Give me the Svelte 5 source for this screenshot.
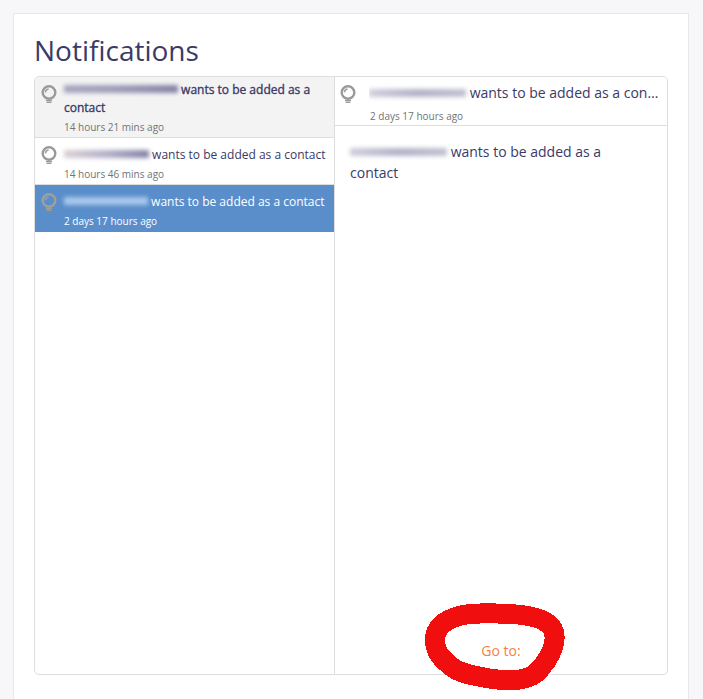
<script>
  const items = [
    { id: 1, who: 'w1', text: 'wants to be added as a contact', time: '14 hours 21 mins ago', unread: true },
    { id: 2, who: 'w2', text: 'wants to be added as a contact', time: '14 hours 46 mins ago' },
    { id: 3, who: 'w3', text: 'wants to be added as a contact', time: '2 days 17 hours ago', selected: true },
  ]
</script>

{#snippet bulb()}
  <svg class="bulb" viewBox="0 0 16 20" width="16" height="20" aria-hidden="true">
    <circle cx="8" cy="7.5" r="6.3" fill="none" stroke="currentColor" stroke-width="2.4" />
    <path d="M4.4 7.4a3.6 3.6 0 0 1 3.2-3.4" fill="none" stroke="currentColor" stroke-width="1.4" />
    <path d="M5 15.6h6M5.6 17.4h4.8" fill="none" stroke="currentColor" stroke-width="1.2" />
  </svg>
{/snippet}

<main class="card">
  <h1>Notifications</h1>
  <div class="panel">
    <ul class="list">
      {#each items as item (item.id)}
        <li class="row" class:unread={item.unread} class:selected={item.selected}>
          {@render bulb()}
          <div class="body">
            <div class="msg"><span class="smudge {item.who}"></span> {item.text}</div>
            <div class="time">{item.time}</div>
          </div>
        </li>
      {/each}
    </ul>
    <section class="detail">
      <header class="detail-head">
        {@render bulb()}
        <div class="body">
          <div class="subject"><span class="smudge w4"></span> wants to be added as a contact</div>
          <div class="time">2 days 17 hours ago</div>
        </div>
      </header>
      <div class="content">
        <p><span class="smudge w5"></span> wants to be added as a contact</p>
      </div>
      <div class="footer"><span class="goto">Go to:</span></div>
    </section>
  </div>
  <svg class="scribble" viewBox="0 0 160 105" width="160" height="105" shape-rendering="crispEdges" aria-hidden="true">
    <path d="M23 45C23 28 42 18 71 18.5C100 18 125 20 135 28C141 32 143 38 142.5 44C142 55 135 66 128 74C118 87 98 86 80 84C65 81 48 79 40 72C31 65 23 58 23 45Z" fill="none" stroke="#f10e0e" stroke-width="20" stroke-linejoin="round" />
  </svg>
</main>

<style>
  :global(body) {
    background: #f7f7f9;
    overflow: hidden;
    font-family: "Open Sans", "Noto Sans", sans-serif;
    color: #3a3a68;
  }

  .card {
    position: relative;
    box-sizing: border-box;
    width: 676px;
    height: 686px;
    margin: 13px 0 0 13px;
    padding: 20px 20px 24px 20px;
    background: #fff;
    border: 1px solid #e8e8ec;
    border-bottom: 0;
  }

  h1 {
    margin: 0;
    height: 42px;
    font-size: 28px;
    line-height: 32px;
    font-weight: 400;
    color: #3a3a68;
  }

  .panel {
    display: flex;
    height: 599px;
    box-sizing: border-box;
    border: 1px solid #dedede;
    border-radius: 5px;
    overflow: hidden;
  }

  .list {
    flex: 0 0 299px;
    margin: 0;
    padding: 0;
    list-style: none;
    border-right: 1px solid #dedede;
  }

  .row {
    display: flex;
    gap: 7px;
    padding: 8px 8px 2px 6px;
    border-bottom: 1px solid #dedede;
  }

  .row.unread {
    padding: 4px 8px 2px 6px;
    background: #f3f3f3;
  }

  .row.unread .msg {
    -webkit-text-stroke: 0.35px currentColor;
  }

  .row.unread .bulb {
    margin-top: 4px;
  }

  .row.selected {
    padding-bottom: 3px;
    background: #5a8ecb;
    color: #fff;
    border-bottom: 0;
  }

  .row.selected .time {
    color: #fff;
  }

  .row.selected .bulb {
    color: #a0a096;
  }

  .bulb {
    flex: none;
    color: #9a9a9a;
  }

  .body {
    flex: 1;
    min-width: 0;
  }

  .msg {
    font-size: 12px;
    line-height: 18px;
  }

  .time {
    font-size: 10px;
    line-height: 16px;
    margin-top: 2px;
    color: #6f7478;
  }

  .smudge {
    display: inline-block;
    height: 8px;
    vertical-align: 1px;
    background: linear-gradient(90deg, #a8a6c0, #9e9cb8 45%, #8582a6);
    filter: blur(2px);
  }

  .w1 { width: 114px; }
  .w2 { width: 85px; background: linear-gradient(90deg, #ddd0d6, #b3b1c8 50%, #8582a6); }
  .w3 { width: 84px; background: #a9c8ea; }
  .w4 { width: 97px; background: linear-gradient(90deg, #d0cfdc, #b3b2c8 50%, #c2c1d2); }
  .w5 { width: 97px; background: linear-gradient(90deg, #d0cfdc, #b3b2c8 50%, #c2c1d2); }

  .detail {
    flex: 1;
    min-width: 0;
    display: flex;
    flex-direction: column;
  }

  .detail-head {
    display: flex;
    gap: 13px;
    padding: 6px 7px 1px 5px;
    border-bottom: 1px solid #dedede;
  }

  .detail-head .bulb {
    margin-top: 2px;
  }

  .detail-head .time {
    margin: 5px 0 0 1px;
  }

  .subject {
    font-size: 14px;
    line-height: 20px;
    white-space: nowrap;
    overflow: hidden;
    text-overflow: ellipsis;
  }

  .content {
    flex: 1;
    padding: 15px 15px;
  }

  .content p {
    margin: 0;
    font-size: 14px;
    line-height: 21px;
  }

  .footer {
    padding-bottom: 13px;
    text-align: center;
    font-size: 14px;
    line-height: 20px;
  }

  .goto {
    color: #f97f3f;
  }

  .scribble {
    position: absolute;
    left: 398px;
    top: 581px;
  }
</style>
